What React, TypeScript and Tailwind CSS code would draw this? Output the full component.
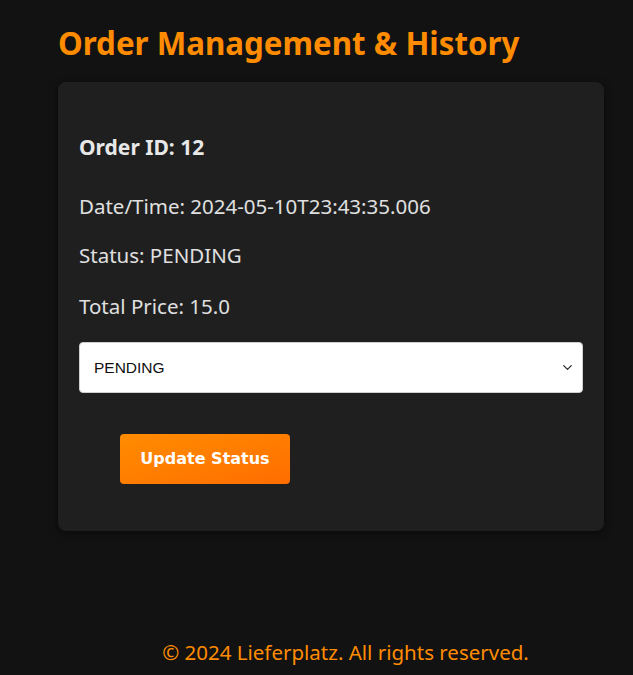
import { ChevronDown } from "lucide-react";

const body = "font-['Noto_Sans',_'Open_Sans',_sans-serif]";

export default function App() {
  return (
    <div className={`min-h-[675px] bg-[#121212] ${body} text-[#e0e0e0]`}>
      <main className="pl-[58px] pr-[29px] pt-[21px]">
        <h1 className="h-[44px] text-[31.3px] leading-[44px] font-bold text-[#ff8c00]">
          Order Management &amp; History
        </h1>

        <section className="mt-[17px] w-[546px] rounded-lg bg-[#1f1f1f] px-[21px] pt-[52px] pb-[47px] shadow-[0_2px_8px_rgba(0,0,0,0.5)]">
          <h3 className="h-[27px] text-[21px] leading-[27px] font-bold text-[#e8e8e8]">Order ID: 12</h3>
          <p className="mt-[32px] h-[27px] text-[20.5px] leading-[27px]">Date/Time: 2024-05-10T23:43:35.006</p>
          <p className="mt-[22px] h-[27px] text-[20.5px] leading-[27px]">Status: PENDING</p>
          <p className="mt-[24px] h-[27px] text-[20.5px] leading-[27px]">Total Price: 15.0</p>

          <div className="relative mt-[22px] h-[51px] w-[504px]">
            <select
              defaultValue="PENDING"
              className="h-full w-full appearance-none rounded-[4px] border border-[#cfcfcf] bg-white pl-[14px] font-['Liberation_Sans',_sans-serif] text-[15.5px] text-[#111]"
            >
              <option>PENDING</option>
              <option>CONFIRMED</option>
              <option>DELIVERED</option>
              <option>CANCELLED</option>
            </select>
            <ChevronDown className="pointer-events-none absolute right-[8px] top-[18px] h-[15px] w-[15px] text-[#333]" strokeWidth={2.2} />
          </div>

          <button className="mt-[41px] ml-[41px] h-[50px] w-[170px] rounded-[4px] bg-gradient-to-br from-[#ff8c00] to-[#ff6d00] font-['DejaVu_Sans',_sans-serif] text-[16px] font-bold text-white">
            Update Status
          </button>
        </section>
      </main>

      <footer className="mt-[108px] pl-[58px] text-center text-[20.5px] leading-[27px] text-[#ff8c00]">
        © 2024 Lieferplatz. All rights reserved.
      </footer>
    </div>
  );
}
